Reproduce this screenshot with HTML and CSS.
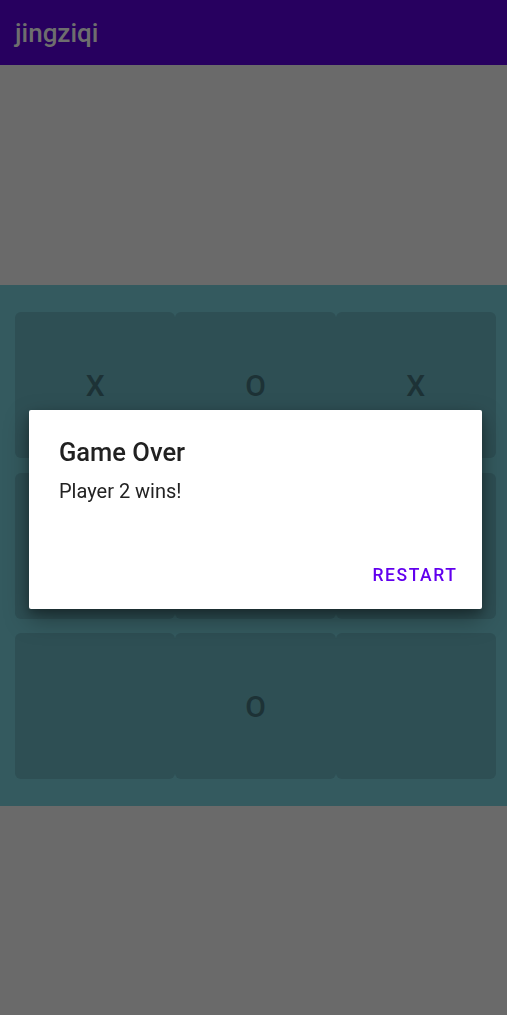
FILE: index.html
```html
<!DOCTYPE html>
<html lang="en">
<head>
<meta charset="utf-8">
<title>jingziqi</title>
<link rel="stylesheet" href="styles.css">
</head>
<body>
<header class="appbar"><span class="appbar-title">jingziqi</span></header>
<div class="top-space"></div>
<section class="board">
  <div class="cell">X</div>
  <div class="cell">O</div>
  <div class="cell">X</div>
  <div class="cell"></div>
  <div class="cell"></div>
  <div class="cell"></div>
  <div class="cell"></div>
  <div class="cell">O</div>
  <div class="cell"></div>
</section>
<div class="bottom-space"></div>
<div class="overlay">
  <div class="dialog">
    <h2 class="dialog-title">Game Over</h2>
    <p class="dialog-message">Player 2 wins!</p>
    <div class="dialog-actions"><span class="dialog-button">RESTART</span></div>
  </div>
</div>
</body>
</html>
```
FILE: styles.css
```css
html, body {
  margin: 0;
  padding: 0;
}
body {
  background: #6a6a6a;
  font-family: Roboto, "Noto Sans", sans-serif;
  width: 507px;
  height: 1015px;
  overflow: hidden;
}
.appbar {
  height: 65px;
  background: #27005f;
  display: flex;
  align-items: center;
  padding-left: 15px;
  box-sizing: border-box;
}
.appbar-title {
  color: #6e6e6e;
  font-size: 26px;
  font-weight: 500;
  line-height: 30px;
}
.top-space {
  height: 220px;
}
.board {
  background: #345a5f;
  padding: 27px 11px 27px 15px;
  display: grid;
  grid-template-columns: repeat(3, 1fr);
  grid-auto-rows: 146px;
  row-gap: 14.5px;
}
.cell {
  background: #2e4f54;
  border-radius: 6px;
  display: flex;
  align-items: center;
  justify-content: center;
  color: #1d3236;
  font-size: 30px;
  font-weight: 500;
}
.overlay {
  position: fixed;
  inset: 0;
  display: flex;
  align-items: center;
  padding: 4px 25px 0 29px;
}
.dialog {
  flex: 1;
  background: #ffffff;
  border-radius: 2px;
  box-shadow: 0 10px 24px rgba(0, 0, 0, 0.35), 0 4px 10px rgba(0, 0, 0, 0.25);
  padding: 26px 26px 24px 30px;
  box-sizing: border-box;
  height: 199px;
  display: flex;
  flex-direction: column;
}
.dialog-title {
  margin: 0;
  font-size: 25.5px;
  font-weight: 500;
  line-height: 32px;
  color: #212121;
}
.dialog-message {
  margin: 9px 0 0;
  font-size: 20px;
  line-height: 28px;
  color: #222222;
}
.dialog-actions {
  margin-top: auto;
  display: flex;
  justify-content: flex-end;
}
.dialog-button {
  color: #6200ee;
  font-size: 17.5px;
  font-weight: 500;
  letter-spacing: 1.56px;
  line-height: 20px;
  margin-right: -1.5px;
}
```
